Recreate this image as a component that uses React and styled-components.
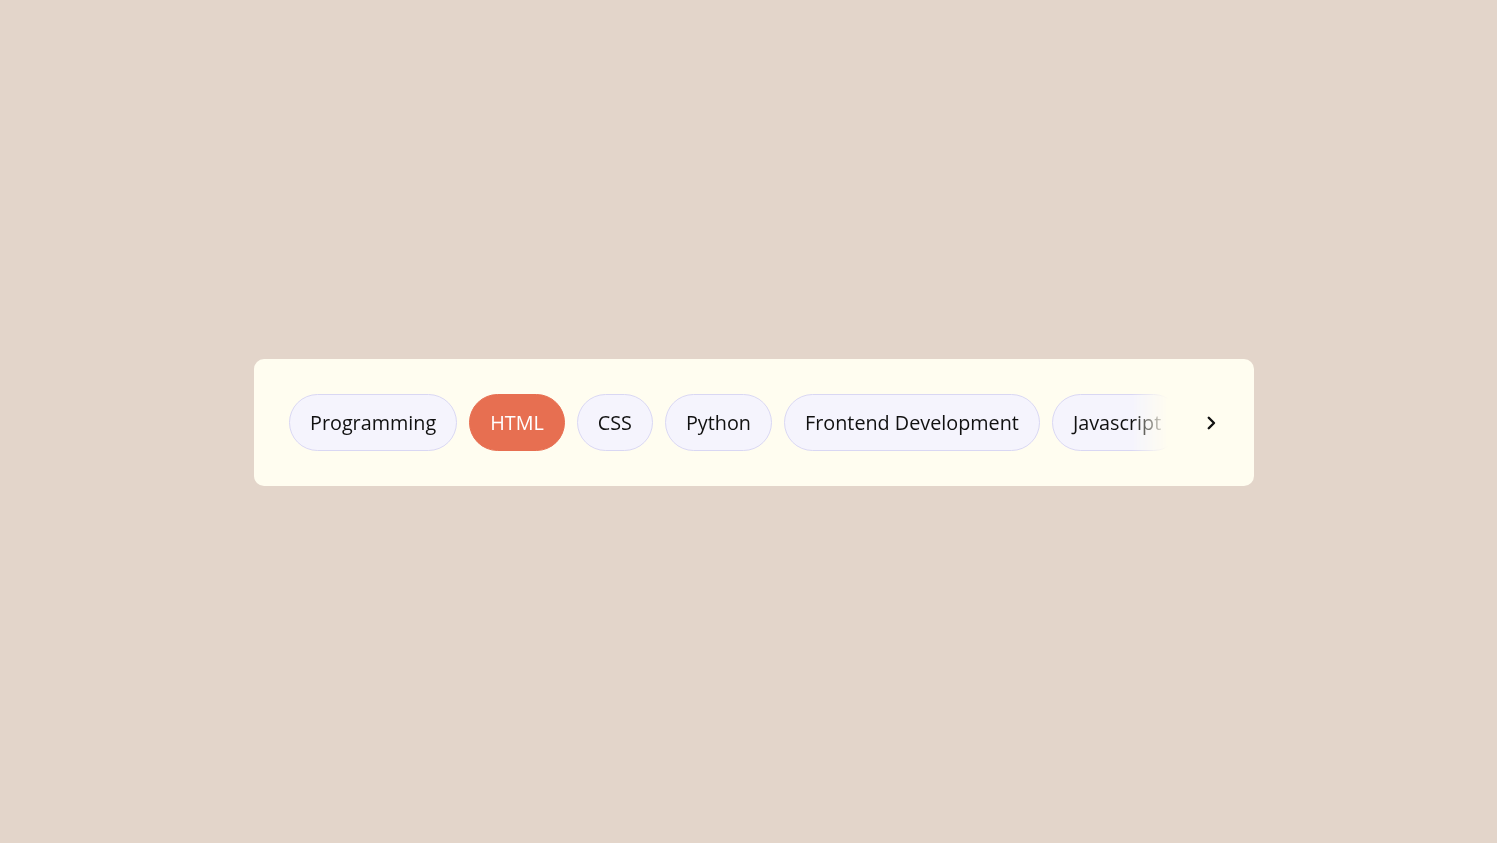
import { createGlobalStyle, styled } from 'styled-components'

const tags = [
  'Programming',
  'HTML',
  'CSS',
  'Python',
  'Frontend Development',
  'Javascript',
  'React',
  'Node.js',
]

const GlobalStyle = createGlobalStyle`
  html, body {
    margin: 0;
    padding: 0;
  }
  body {
    background: #e3d5ca;
    font-family: 'Open Sans', 'Liberation Sans', sans-serif;
  }
`

const App = () => {
  return (
    <Page>
      <GlobalStyle />
      <Card>
        <Scroller>
          {tags.map((tag) => (
            <Tag key={tag} $active={tag === 'HTML'}>
              {tag}
            </Tag>
          ))}
        </Scroller>
        <ArrowButton aria-label="next">
          <svg width="18" height="18" viewBox="0 0 24 24" fill="none">
            <path
              d="M9 5l7 7-7 7"
              stroke="#111"
              strokeWidth="3.2"
              strokeLinecap="round"
              strokeLinejoin="round"
            />
          </svg>
        </ArrowButton>
      </Card>
    </Page>
  )
}
export default App

const Page = styled.div`
  width: 100vw;
  height: 100vh;
  box-sizing: border-box;
  padding-left: 11px;
  display: flex;
  align-items: center;
  justify-content: center;
`

const Card = styled.div`
  width: 1000px;
  height: 127px;
  box-sizing: border-box;
  padding: 0 25px 0 35px;
  background: #fffdf0;
  border-radius: 10px;
  display: flex;
  align-items: center;
  margin-top: 2px;
`

const Scroller = styled.div`
  flex: 1;
  display: flex;
  gap: 12px;
  overflow: hidden;
  mask-image: linear-gradient(to right, #000 calc(100% - 36px), transparent);
`

const Tag = styled.button`
  flex-shrink: 0;
  height: 57px;
  box-sizing: border-box;
  padding: 0 20px;
  border-radius: 29px;
  border: 1px solid ${({ $active }) => ($active ? '#e76f51' : '#d9d7f3')};
  background: ${({ $active }) => ($active ? '#e76f51' : '#f5f4fd')};
  color: ${({ $active }) => ($active ? '#fff' : '#111')};
  font-family: inherit;
  font-size: 19.8px;
  letter-spacing: 0;
  cursor: pointer;
`

const ArrowButton = styled.button`
  width: 36px;
  height: 36px;
  margin-left: 25px;
  border: none;
  background: transparent;
  display: flex;
  align-items: center;
  justify-content: center;
  cursor: pointer;
  padding: 0;
`
